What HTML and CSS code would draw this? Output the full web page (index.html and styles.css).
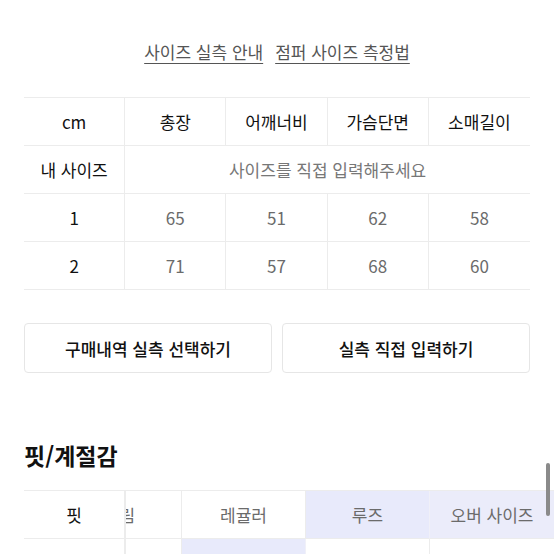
FILE: index.html
```html
<!DOCTYPE html>
<html lang="ko">
<head>
<meta charset="utf-8">
<link rel="stylesheet" href="styles.css">
</head>
<body>
<div class="page">
  <div class="links">
    <a class="link" href="#">사이즈 실측 안내</a>
    <a class="link" href="#">점퍼 사이즈 측정법</a>
  </div>

  <div class="size-table">
    <div class="cell head">cm</div>
    <div class="cell head">총장</div>
    <div class="cell head">어깨너비</div>
    <div class="cell head">가슴단면</div>
    <div class="cell head last">소매길이</div>

    <div class="cell head">내 사이즈</div>
    <div class="cell hint span4 last">사이즈를 직접 입력해주세요</div>

    <div class="cell head">1</div>
    <div class="cell val">65</div>
    <div class="cell val">51</div>
    <div class="cell val">62</div>
    <div class="cell val last">58</div>

    <div class="cell head">2</div>
    <div class="cell val">71</div>
    <div class="cell val">57</div>
    <div class="cell val">68</div>
    <div class="cell val last">60</div>
  </div>

  <div class="buttons">
    <button class="btn">구매내역 실측 선택하기</button>
    <button class="btn">실측 직접 입력하기</button>
  </div>

  <h2 class="section-title">핏/계절감</h2>

  <div class="fit-table">
    <div class="fit-fixed">
      <div class="fcell head">핏</div>
      <div class="fcell head">두께감</div>
    </div>
    <div class="fit-scroll">
      <div class="fit-inner">
        <div class="fcell opt">슬림</div>
        <div class="fcell opt">레귤러</div>
        <div class="fcell opt sel">루즈</div>
        <div class="fcell opt sel2 last">오버 사이즈</div>

        <div class="fcell opt">약간 얇음</div>
        <div class="fcell opt sel">보통</div>
        <div class="fcell opt">약간 두꺼움</div>
        <div class="fcell opt last">두꺼움</div>
      </div>
    </div>
    <div class="scrollbar"></div>
  </div>
</div>
</body>
</html>
```

FILE: styles.css
```css
* {
  box-sizing: border-box;
}

html, body {
  margin: 0;
  padding: 0;
  background: #ffffff;
  overflow: hidden;
}

body {
  font-family: "Noto Sans CJK KR", "Noto Sans", sans-serif;
  color: #111;
}

.page {
  padding: 0 24px;
  width: 554px;
}

.links {
  display: flex;
  justify-content: center;
  gap: 12px;
  padding-top: 40px;
  height: 97px;
}

.link {
  font-size: 17px;
  line-height: 24px;
  color: #555;
  text-decoration: underline;
  text-underline-offset: 4px;
  text-decoration-thickness: 1px;
  text-decoration-color: #555;
}

.size-table {
  display: grid;
  grid-template-columns: repeat(5, 1fr);
  border-top: 1px solid #ececec;
}

.cell {
  height: 48px;
  display: flex;
  align-items: center;
  justify-content: center;
  font-size: 17px;
  border-bottom: 1px solid #ececec;
  border-right: 1px solid #ececec;
}

.cell.last {
  border-right: none;
}

.cell.head {
  color: #111;
  font-weight: 400;
}

.cell.val {
  color: #6b6b6b;
}

.cell.hint {
  color: #777;
}

.span4 {
  grid-column: span 4;
}

.buttons {
  display: grid;
  grid-template-columns: 1fr 1fr;
  gap: 10px;
  margin-top: 33px;
}

.btn {
  height: 50px;
  border: 1px solid #e6e6e6;
  border-radius: 4px;
  background: #fff;
  font-family: "Noto Sans CJK KR", "Noto Sans", sans-serif;
  font-size: 17px;
  font-weight: 500;
  color: #111;
}

.section-title {
  margin: 66px 0 0;
  font-size: 23px;
  line-height: 32px;
  font-weight: 700;
  color: #111;
}

.fit-table {
  position: relative;
  display: flex;
  margin-top: 19px;
  margin-right: -24px;
  border-top: 1px solid #ececec;
}

.fit-fixed {
  width: 102px;
  flex: none;
  border-right: 1px solid #ececec;
  background: #fff;
}

.fit-scroll {
  flex: 1;
  overflow: hidden;
}

.fit-inner {
  display: grid;
  grid-template-columns: repeat(4, 124px);
  margin-left: -68px;
}

.fcell {
  height: 48px;
  display: flex;
  align-items: center;
  justify-content: center;
  font-size: 17px;
  border-bottom: 1px solid #ececec;
  border-right: 1px solid #ececec;
  white-space: nowrap;
}

.fcell.last {
  border-right: none;
}

.fcell.head {
  font-weight: 400;
  color: #111;
}

.fcell.opt {
  color: #6b6b6b;
}

.fcell.sel {
  background: #e8eafb;
  border-right-color: #f0f0f8;
}

.fcell.sel2 {
  background: #ebecfa;
}

.scrollbar {
  position: absolute;
  right: 4px;
  top: -28px;
  width: 4px;
  height: 53px;
  border-radius: 2px;
  background: #8a8a8a;
}
```
